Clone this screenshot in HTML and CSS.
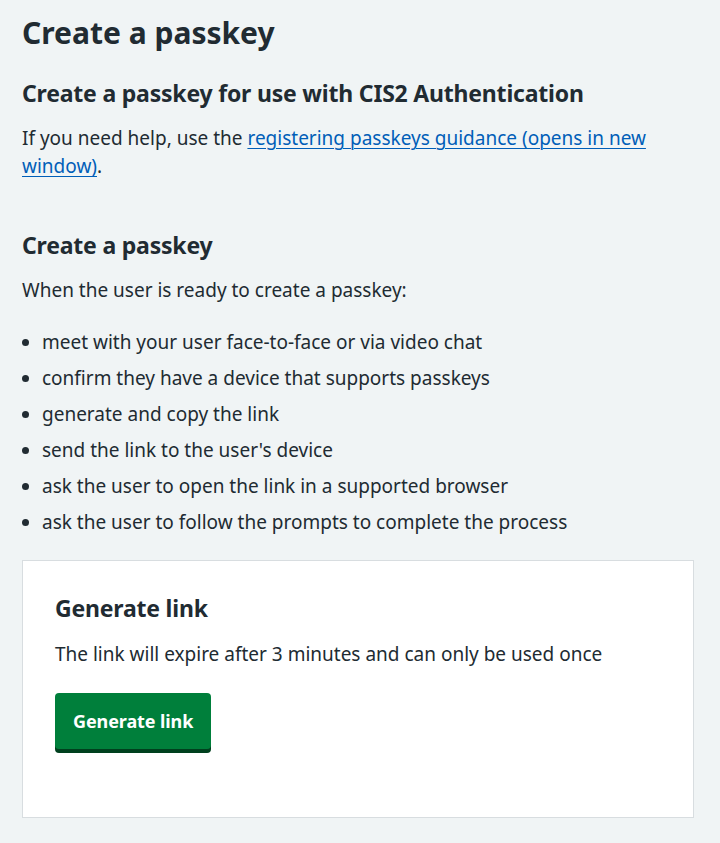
FILE: index.html
```html
<!DOCTYPE html>
<html lang="en">
<head>
<meta charset="utf-8">
<title>Create a passkey</title>
<link rel="stylesheet" href="styles.css">
</head>
<body>
<main class="page">
  <h1 class="title">Create a passkey</h1>
  <h2 class="heading heading-first">Create a passkey for use with CIS2 Authentication</h2>
  <p class="body body-help">If you need help, use the <a class="link" href="#">registering passkeys guidance (opens in new window)</a>.</p>
  <h2 class="heading">Create a passkey</h2>
  <p class="body">When the user is ready to create a passkey:</p>
  <ul class="steps">
    <li>meet with your user face-to-face or via video chat</li>
    <li>confirm they have a device that supports passkeys</li>
    <li>generate and copy the link</li>
    <li>send the link to the user's device</li>
    <li>ask the user to open the link in a supported browser</li>
    <li>ask the user to follow the prompts to complete the process</li>
  </ul>
  <section class="card">
    <h3 class="heading card-heading">Generate link</h3>
    <p class="body">The link will expire after 3 minutes and can only be used once</p>
    <button class="button" type="button">Generate link</button>
  </section>
</main>
</body>
</html>
```
FILE: styles.css
```css
html, body {
  margin: 0;
  padding: 0;
}
body {
  background: #f0f4f5;
  color: #212b32;
  font-family: "Noto Sans", "Open Sans", "Liberation Sans", sans-serif;
  -webkit-font-smoothing: antialiased;
}
.page {
  padding: 13px 26px 26px 22px;
}
.title {
  margin: 0;
  font-size: 30px;
  line-height: 40px;
  font-weight: 700;
}
.heading {
  margin: 0 0 15px;
  font-size: 23px;
  line-height: 32px;
  font-weight: 700;
  letter-spacing: -0.2px;
}
.heading-first {
  margin-top: 24px;
}
.body {
  margin: 0 0 24px;
  font-size: 19px;
  line-height: 28px;
}
.body-help {
  margin-bottom: 49px;
}
.link {
  color: #005eb8;
  text-decoration: underline;
  text-decoration-thickness: 1px;
  text-underline-offset: 3px;
}
.steps {
  margin: 0 0 24px;
  padding-left: 20px;
  font-size: 19px;
  line-height: 28px;
}
.steps li {
  margin-bottom: 8px;
}
.steps li:last-child {
  margin-bottom: 0;
}
.card {
  background: #ffffff;
  border: 1px solid #d8dde0;
  padding: 31px 32px 32px 32px;
}
.card-heading {
  margin-bottom: 16px;
}
.card .body {
  margin-bottom: 25px;
}
.button {
  display: inline-block;
  margin: 0 0 36px;
  padding: 12px 16px;
  border: 2px solid transparent;
  border-radius: 4px;
  background: #007f3b;
  color: #ffffff;
  font-family: inherit;
  font-size: 18px;
  line-height: 28px;
  font-weight: 700;
  letter-spacing: -0.1px;
  box-shadow: 0 4px 0 #00401e;
  cursor: pointer;
}
```
